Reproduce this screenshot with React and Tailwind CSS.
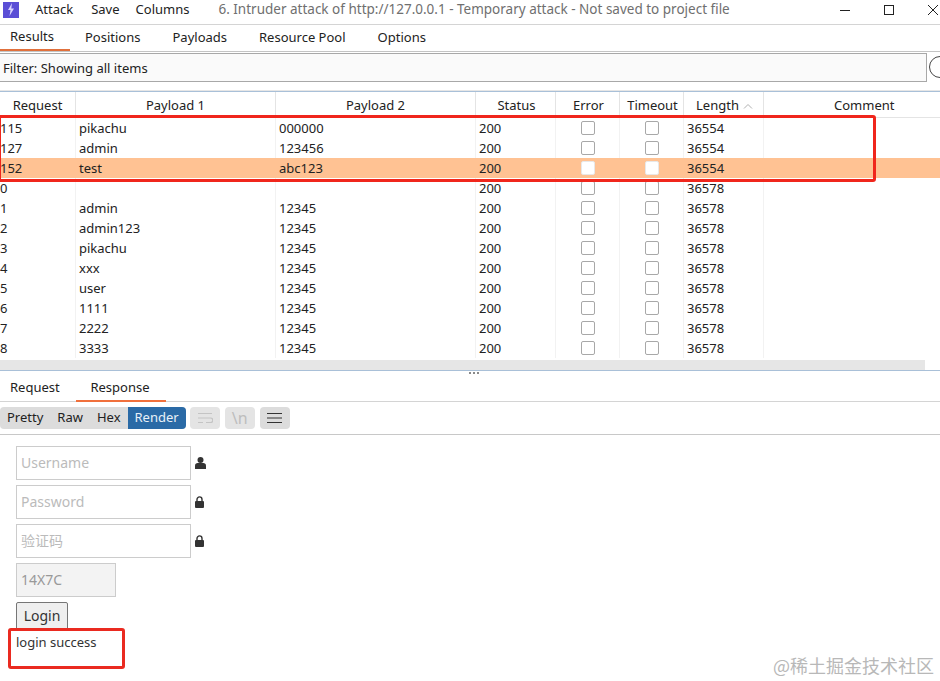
import React from "react";

const tabs = ["Results", "Positions", "Payloads", "Resource Pool", "Options"];

const rows = [
  ["115", "pikachu", "000000", "36554"],
  ["127", "admin", "123456", "36554"],
  ["152", "test", "abc123", "36554", true],
  ["0", "", "", "36578"],
  ["1", "admin", "12345", "36578"],
  ["2", "admin123", "12345", "36578"],
  ["3", "pikachu", "12345", "36578"],
  ["4", "xxx", "12345", "36578"],
  ["5", "user", "12345", "36578"],
  ["6", "1111", "12345", "36578"],
  ["7", "2222", "12345", "36578"],
  ["8", "3333", "12345", "36578"],
];

const UserIcon = () => (
  <svg width="11" height="12" viewBox="0 0 11 12" fill="#333">
    <circle cx="5.5" cy="3" r="3" />
    <path d="M0 12V8.5C0 7 1.2 6 2.6 6h5.8C9.8 6 11 7 11 8.5V12z" />
  </svg>
);

const LockIcon = () => (
  <svg width="9" height="12" viewBox="0 0 9 12" fill="none">
    <path d="M2 5.5V3.4a2.5 2.500 0 0 1 5 0v2.100" stroke="#333" strokeWidth="1.4" />
    <rect x="0" y="5" width="9" height="7" rx="1" fill="#333" />
  </svg>
);

const Checkbox = ({ selected }) => (
  <div className="flex justify-center items-center pl-[1px]">
    <div className={`w-[14px] h-[14px] rounded-[2px] border bg-white ${selected ? "border-[#e8e8e8]" : "border-[#a8a8a8]"}`} />
  </div>
);

const HeaderCell = ({ className, children }) => (
  <div className={`flex items-center justify-center pt-[2px] border-r border-[#e4e4e4] ${className}`}>{children}</div>
);

const Field = ({ placeholder, icon }) => (
  <div className="flex items-center">
    <div className="w-[175px] h-[34px] border border-[#cccccc] bg-white flex items-center px-[4px] pb-[2px] text-[14px] text-[#bbbbbb]">
      {placeholder}
    </div>
    <div className="w-[11px] ml-[4px] flex">{icon}</div>
  </div>
);

export default function App() {
  return (
    <div
      className="relative w-[940px] h-[681px] overflow-hidden bg-white text-[13px] text-[#222222]"
      style={{ fontFamily: '"Noto Sans", "Open Sans", "Noto Sans CJK SC", sans-serif' }}
    >
      {/* Title bar */}
      <div className="h-[25px] flex items-center pb-[5px] border-b border-[#d4d4d4] pl-[3px]">
        <div className="w-[16px] h-[16px] bg-[#5b4fd6] flex items-center justify-center">
          <svg width="8" height="13" viewBox="0 0 8 13" fill="#d9d4ff">
            <path d="M5 0 1 7h2.500L2.500 13 7 5.500H4.300z" />
          </svg>
        </div>
        <div className="flex gap-[16px] ml-[16px]">
          <span>Attack</span>
          <span className="ml-[2px]">Save</span>
          <span>Columns</span>
        </div>
        <span className="ml-[29px] text-[13.5px] text-[#6f6f6f]">6. Intruder attack of http://127.0.0.1 - Temporary attack - Not saved to project file</span>
        <div className="ml-auto flex items-center">
          <svg width="12" height="12" viewBox="0 0 12 12" className="mr-[32px]" stroke="#222" fill="none">
            <path d="M1 6.500h10" />
          </svg>
          <svg width="12" height="12" viewBox="0 0 12 12" className="mr-[32px]" stroke="#222" fill="none">
            <rect x="1.500" y="1.500" width="9" height="9" />
          </svg>
          <svg width="12" height="12" viewBox="0 0 12 12" className="mr-[1px]" stroke="#222" fill="none">
            <path d="M1 1l10 10M11 1 1 11" />
          </svg>
        </div>
      </div>

      {/* Main tabs */}
      <div className="h-[27px] flex border-b border-[#c4c4c4]">
        {tabs.map((t, i) => (
          <div
            key={t}
            className={`h-[26px] flex items-center ${i === 0 ? "w-[70px] pl-[10px] border-b-2 border-[#e0703c]" : "pl-[15px] pr-[17px]"}`}
          >
            {t}
          </div>
        ))}
      </div>

      {/* Filter */}
      <div className="h-[39px] flex items-start pt-[1px] border-b border-[#e6e6e6]">
        <div className="w-[927px] h-[29px] shrink-0 bg-[#fafafa] border-y border-r border-[#a8a8a8] flex items-center pl-[3px] pt-[2px]">
          Filter: Showing all items
        </div>
        {/* help button, cut off by the window edge */}
        <div className="ml-[2px] w-[22px] h-[22px] mt-[3px] shrink-0 rounded-full border border-[#444]" />
      </div>

      {/* Results table */}
      <div className="border-t border-[#a9c0d8] h-[27px] flex border-b border-b-[#e4e4e4] bg-white">
        <HeaderCell className="w-[76px]">Request</HeaderCell>
        <HeaderCell className="w-[200px]">Payload 1</HeaderCell>
        <HeaderCell className="w-[200px]">Payload 2</HeaderCell>
        <HeaderCell className="w-[80px] pl-[2px]">Status</HeaderCell>
        <HeaderCell className="w-[64px] pl-[2px]">Error</HeaderCell>
        <HeaderCell className="w-[64px] pl-[2px]">Timeout</HeaderCell>
        <HeaderCell className="w-[80px] pl-[2px] gap-[4px]">
          Length
          <svg width="10" height="6" viewBox="0 0 10 6" fill="none" stroke="#b0b0b0">
            <path d="M1 5.500 5 1.500l4 4" />
          </svg>
        </HeaderCell>
        <div className="flex-1 flex items-center pl-[70px] pt-[2px]">Comment</div>
      </div>

      <div className="h-[242px]">
        {rows.map(([req, p1, p2, len, selected]) => (
          <div key={req} className={`h-[20px] flex items-center ${selected ? "bg-[#ffc293]" : ""}`}>
            <div className={`w-[76px] h-full flex items-center pt-[2px] border-r ${selected ? "border-transparent" : "border-[#f2f2f2]"}`}>{req}</div>
            <div className={`w-[200px] h-full flex items-center pl-[3px] pt-[2px] border-r ${selected ? "border-transparent" : "border-[#f2f2f2]"}`}>{p1}</div>
            <div className={`w-[200px] h-full flex items-center pl-[3px] pt-[2px] border-r ${selected ? "border-transparent" : "border-[#f2f2f2]"}`}>{p2}</div>
            <div className={`w-[80px] h-full flex items-center pl-[3px] pt-[2px] border-r ${selected ? "border-transparent" : "border-[#f2f2f2]"}`}>200</div>
            <div className={`w-[64px] h-full flex items-center justify-center border-r ${selected ? "border-transparent" : "border-[#f2f2f2]"}`}><Checkbox selected={selected} /></div>
            <div className={`w-[64px] h-full flex items-center justify-center border-r ${selected ? "border-transparent" : "border-[#f2f2f2]"}`}><Checkbox selected={selected} /></div>
            <div className={`w-[80px] h-full flex items-center pl-[3px] pt-[2px] border-r ${selected ? "border-transparent" : "border-[#f2f2f2]"}`}>{len}</div>
          </div>
        ))}
      </div>

      {/* Horizontal scrollbar */}
      <div className="h-[10px] bg-[#e6e6e6] mr-[15px]" />
      <div className="relative h-[1px] bg-[#a9c0d8]">
        <div className="absolute left-[469px] top-[2px] flex gap-[2px]">
          <div className="w-[2px] h-[2px] bg-[#8a8a8a]" />
          <div className="w-[2px] h-[2px] bg-[#8a8a8a]" />
          <div className="w-[2px] h-[2px] bg-[#8a8a8a]" />
        </div>
      </div>

      {/* Request / Response */}
      <div className="h-[31px] flex border-b border-[#d4d4d4]">
        <div className="w-[76px] h-[30px] flex items-center pl-[10px] pt-[4px]">Request</div>
        <div className="w-[90px] h-[31px] flex items-center justify-center pt-[5px] pr-[2px] border-b-2 border-[#f0703c]">Response</div>
      </div>

      {/* Viewer toolbar */}
      <div className="h-[33px] flex items-center pb-[1px] border-b border-[#c8c8c8]">
        <div className="flex h-[22px] rounded-[4px] overflow-hidden bg-[#dcdcdc]">
          <div className="flex items-center pl-[7px] pr-[7px]">Pretty</div>
          <div className="flex items-center px-[7px]">Raw</div>
          <div className="flex items-center pl-[7px] pr-[7px]">Hex</div>
          <div className="flex items-center px-[7px] bg-[#2a6aa6] text-[#e8f0f8]">Render</div>
        </div>
        <div className="ml-[4px] w-[30px] h-[22px] rounded-[4px] bg-[#e4e4e4] flex items-center justify-center">
          <svg width="16" height="12" viewBox="0 0 16 12" fill="none" stroke="#c4c4c4" strokeWidth="1.200">
            <path d="M1 1.500h14M1 6h12.500a1.800 1.800 0 0 1 0 4.500H9M1 10.500h5" />
          </svg>
        </div>
        <div className="ml-[5px] w-[30px] h-[22px] rounded-[4px] bg-[#e4e4e4] flex items-center justify-center text-[16px] text-[#bdbdbd]">
          \n
        </div>
        <div className="ml-[5px] w-[30px] h-[22px] rounded-[4px] bg-[#dcdcdc] flex items-center justify-center">
          <svg width="15" height="12" viewBox="0 0 15 12" fill="none" stroke="#333" strokeWidth="1.100">
            <path d="M0 1.500h15M0 6h15M0 10.500h15" />
          </svg>
        </div>
      </div>

      {/* Rendered response */}
      <div className="pl-[16px] pt-[11px] flex flex-col gap-[5px]">
        <Field placeholder="Username" icon={<UserIcon />} />
        <Field placeholder="Password" icon={<LockIcon />} />
        <Field
          placeholder={<span style={{ fontFamily: '"Noto Sans CJK SC", sans-serif' }}>验证码</span>}
          icon={<LockIcon />}
        />
        <div className="w-[100px] h-[34px] border border-[#cccccc] bg-[#f3f3f3] flex items-center px-[4px] pb-[2px] text-[14px] text-[#999999]">
          14X7C
        </div>
        <div className="w-[52px] h-[28px] border border-[#767676] rounded-[2px] bg-[#efefef] flex items-center justify-center pb-[2px] text-[14px] text-[#333333]">
          Login
        </div>
        <div className="mt-[-2px] text-[13px] text-[#333333] leading-[18px]">login success</div>
      </div>

      {/* Annotations drawn over the screenshot */}
      <div className="absolute left-[-2px] top-[115px] w-[878px] h-[67px] border-[3px] border-[#f0261c] rounded-[3px] pointer-events-none" />
      <div className="absolute left-[8px] top-[628px] w-[117px] h-[41px] border-[3px] border-[#ea2a20] rounded-[3px] pointer-events-none" />

      {/* Watermark */}
      <div
        className="absolute left-[773px] top-[654px] text-[18px] leading-[22px] text-[#b8b8b8]"
        style={{ fontFamily: '"Noto Sans CJK SC", sans-serif' }}
      >
        @稀土掘金技术社区
      </div>
    </div>
  );
}
